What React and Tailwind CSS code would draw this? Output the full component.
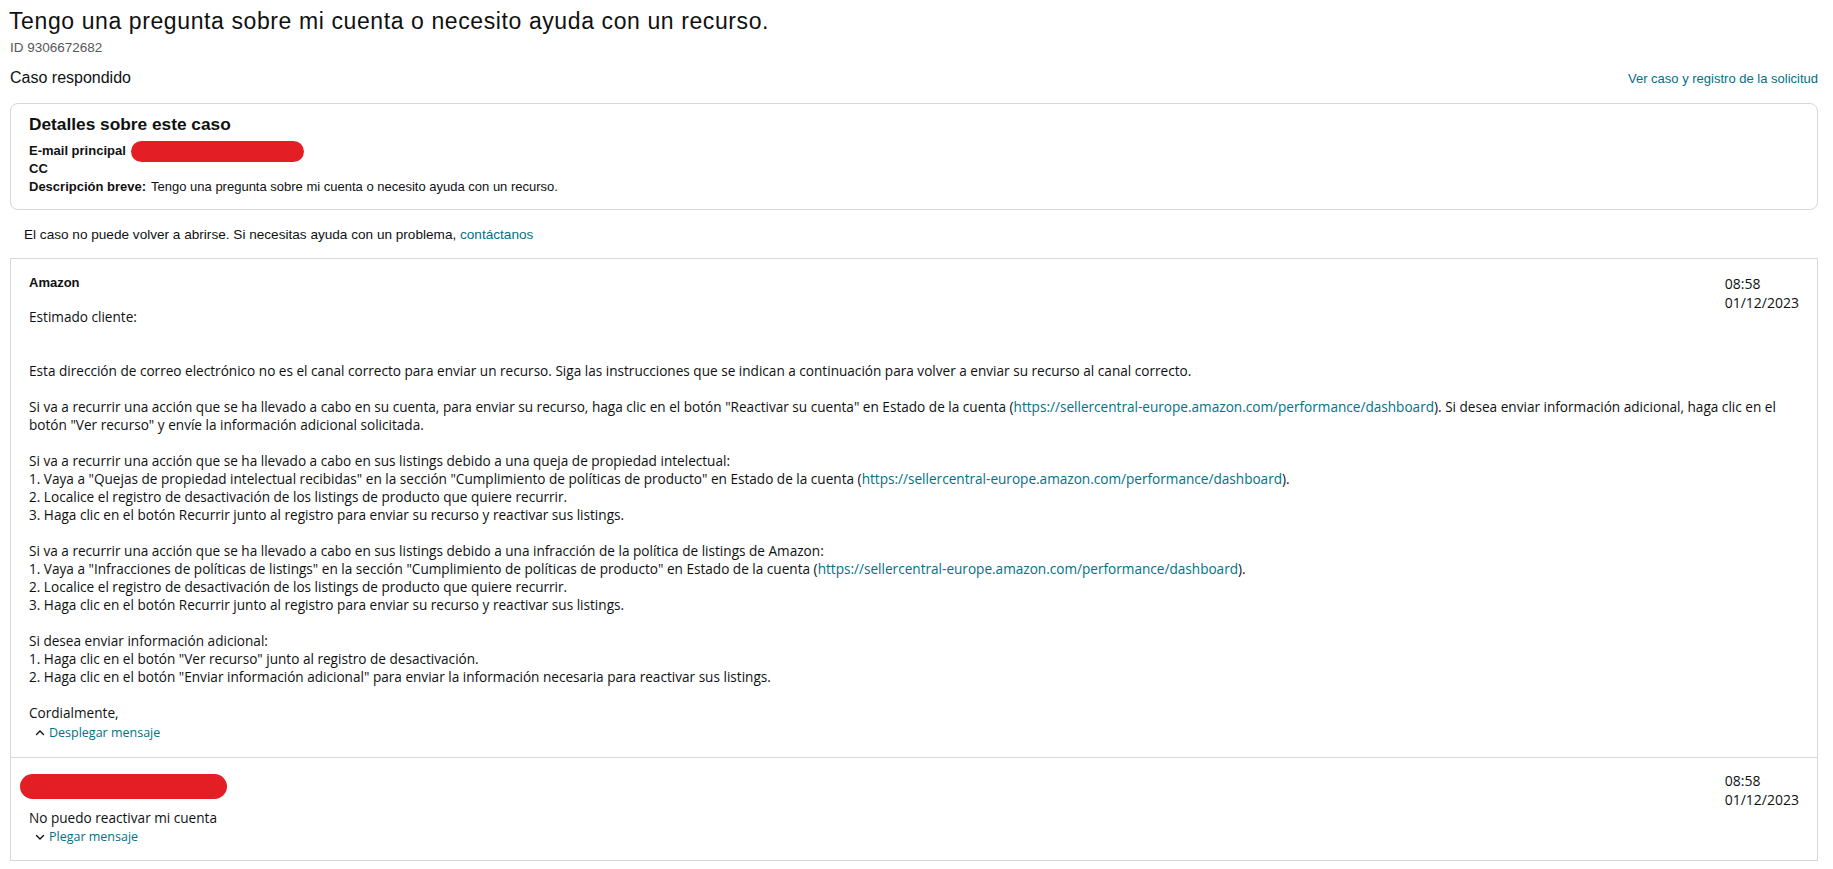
import { memo } from "react";

const DASHBOARD = "https://sellercentral-europe.amazon.com/performance/dashboard";
const SUBJECT = "Tengo una pregunta sobre mi cuenta o necesito ayuda con un recurso.";

const ember = { fontFamily: '"Liberation Sans", Arial, sans-serif' };
const segoe = { fontFamily: '"Open Sans", "Noto Sans", sans-serif' };

const Link = ({ children }) => (
  <a href="#" className="text-[#007185] hover:underline hover:text-[#c7511f]">
    {children}
  </a>
);

const Chevron = ({ up }) => (
  <svg width="10" height="10" viewBox="0 0 10 10" className="shrink-0">
    <path
      d={up ? "M1.5 6.5 L5 3 L8.5 6.5" : "M1.5 3.5 L5 7 L8.5 3.5"}
      fill="none"
      stroke="#0F1111"
      strokeWidth="1.4"
      strokeLinecap="round"
      strokeLinejoin="round"
    />
  </svg>
);

const Redacted = ({ className }) => (
  <div className={`rounded-full bg-[#e31e24] ${className}`} />
);

// hora y fecha, flota a la derecha de la cabecera del mensaje
const Stamp = () => (
  <div className="float-right text-[14px] leading-[19px] text-[#0F1111] text-left" style={segoe}>
    <div>08:58</div>
    <div>01/12/2023</div>
  </div>
);

const withLink = (before, after) => (
  <>
    {before}
    <Link>{DASHBOARD}</Link>
    {after}
  </>
);

// una entrada por línea del correo; null = línea vacía
const LINES = [
  "Estimado cliente:",
  null,
  null,
  "Esta dirección de correo electrónico no es el canal correcto para enviar un recurso. Siga las instrucciones que se indican a continuación para volver a enviar su recurso al canal correcto.",
  null,
  withLink(
    'Si va a recurrir una acción que se ha llevado a cabo en su cuenta, para enviar su recurso, haga clic en el botón "Reactivar su cuenta" en Estado de la cuenta (',
    "). Si desea enviar información adicional, haga clic en el"
  ),
  'botón "Ver recurso" y envíe la información adicional solicitada.',
  null,
  "Si va a recurrir una acción que se ha llevado a cabo en sus listings debido a una queja de propiedad intelectual:",
  withLink(
    '1. Vaya a "Quejas de propiedad intelectual recibidas" en la sección "Cumplimiento de políticas de producto" en Estado de la cuenta (',
    ")."
  ),
  "2. Localice el registro de desactivación de los listings de producto que quiere recurrir.",
  "3. Haga clic en el botón Recurrir junto al registro para enviar su recurso y reactivar sus listings.",
  null,
  "Si va a recurrir una acción que se ha llevado a cabo en sus listings debido a una infracción de la política de listings de Amazon:",
  withLink(
    '1. Vaya a "Infracciones de políticas de listings" en la sección "Cumplimiento de políticas de producto" en Estado de la cuenta (',
    ")."
  ),
  "2. Localice el registro de desactivación de los listings de producto que quiere recurrir.",
  "3. Haga clic en el botón Recurrir junto al registro para enviar su recurso y reactivar sus listings.",
  null,
  "Si desea enviar información adicional:",
  '1. Haga clic en el botón "Ver recurso" junto al registro de desactivación.',
  '2. Haga clic en el botón "Enviar información adicional" para enviar la información necesaria para reactivar sus listings.',
  null,
  "Cordialmente,",
];

const AmazonBody = memo(() => (
  <div className="text-[13.6px] leading-[18px] text-[#0F1111]" style={segoe}>
    {LINES.map((line, i) =>
      line === null ? (
        <div key={i} className="h-[18px]" />
      ) : (
        <div key={i} className="whitespace-nowrap w-fit">
          {line}
        </div>
      )
    )}
  </div>
));

export default function App() {
  return (
    <div className="min-h-screen bg-white text-[#0F1111] pl-[10px] pr-[15px] pt-[7px]" style={ember}>
      <h1 className="text-[23px] leading-[28px] font-normal tracking-[0.6px] ml-[-1px]">{SUBJECT}</h1>
      <div className="mt-[5px] text-[13.5px] leading-[16px] text-[#565959]">ID 9306672682</div>

      <div className="mt-[12px] flex items-center justify-between h-[20px]">
        <span className="text-[16px]">Caso respondido</span>
        <Link>
          <span className="text-[13px]">Ver caso y registro de la solicitud</span>
        </Link>
      </div>

      <section className="mt-[15px] border border-[#D5D9D9] rounded-[8px] pl-[18px] pr-4 pt-[9px] pb-[13px]">
        <h2 className="text-[17.3px] leading-[22px] font-bold">Detalles sobre este caso</h2>
        <div className="mt-[7px] text-[13px] leading-[18px]">
          <div className="flex items-center h-[18px] gap-[5px]">
            <span className="font-bold">E-mail principal</span>
            <Redacted className="w-[173px] h-[21px] shrink-0" />
          </div>
          <div className="font-bold h-[18px]">CC</div>
          <div className="h-[18px]">
            <span className="font-bold">Descripción breve:</span>
            <span className="ml-[5px]">{SUBJECT}</span>
          </div>
        </div>
      </section>

      <p className="mt-[16px] ml-[14px] text-[13.6px] leading-[18px]">
        El caso no puede volver a abrirse. Si necesitas ayuda con un problema, <Link>contáctanos</Link>
      </p>

      <div className="mt-[14px] border border-[#D5D9D9]">
        <article className="px-[18px] pt-[15px] pb-[15px]">
          <Stamp />
          <div className="text-[13px] leading-[18px] font-bold">Amazon</div>
          <div className="mt-[16px]">
            <AmazonBody />
          </div>
          <button className="mt-[2px] ml-[6px] flex items-center gap-[4px] text-[12.5px] leading-[18px] text-[#007185]" style={segoe}>
            <Chevron up />
            Desplegar mensaje
          </button>
        </article>

        <article className="border-t border-[#D5D9D9] px-[18px] pt-[13px] pb-[14px]">
          <Stamp />
          <div className="h-[20px] flex items-center">
            <Redacted className="w-[207px] h-[25px] ml-[-9px] mt-[10px] shrink-0" />
          </div>
          <div className="mt-[18px] text-[13.6px] leading-[18px]" style={segoe}>No puedo reactivar mi cuenta</div>
          <button className="mt-[1px] ml-[6px] flex items-center gap-[4px] text-[12.5px] leading-[18px] text-[#007185]" style={segoe}>
            <Chevron />
            Plegar mensaje
          </button>
        </article>
      </div>
    </div>
  );
}
